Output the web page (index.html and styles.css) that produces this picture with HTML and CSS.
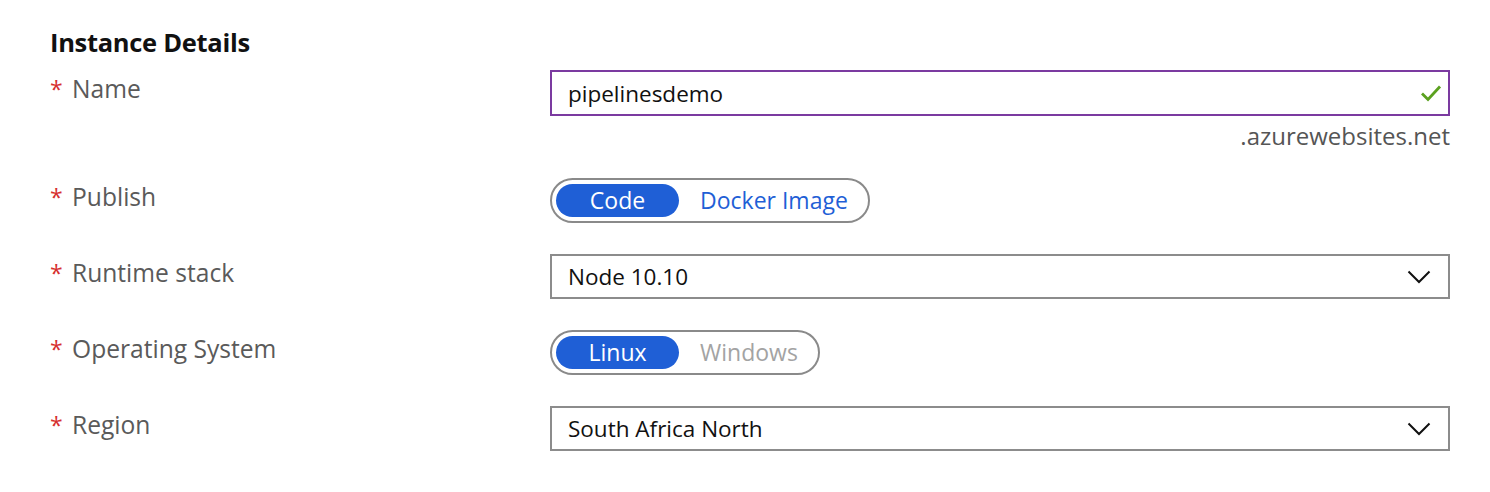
FILE: index.html
```html
<!DOCTYPE html>
<html lang="en">
<head>
<meta charset="utf-8">
<title>Instance Details</title>
<link rel="stylesheet" href="styles.css">
</head>
<body>
<section class="panel">
  <h2 class="heading">Instance Details</h2>

  <div class="row row-name">
    <div class="label"><span class="req">*</span>Name</div>
    <div class="field">
      <div class="input input-valid">
        <span class="value">pipelinesdemo</span>
        <svg class="check" width="22" height="18" viewBox="0 0 22 18"><path d="M2 9.5 L8 15.5 L20 2.5" fill="none" stroke="#5ba11f" stroke-width="2.8"/></svg>
      </div>
      <div class="suffix">.azurewebsites.net</div>
    </div>
  </div>

  <div class="row">
    <div class="label"><span class="req">*</span>Publish</div>
    <div class="field">
      <div class="toggle">
        <span class="opt opt-on">Code</span>
        <span class="opt opt-off">Docker Image</span>
      </div>
    </div>
  </div>

  <div class="row">
    <div class="label"><span class="req">*</span>Runtime stack</div>
    <div class="field">
      <div class="input select">
        <span class="value">Node 10.10</span>
        <svg class="chev" width="24" height="14" viewBox="0 0 24 14"><path d="M1.5 1.5 L12 12 L22.5 1.5" fill="none" stroke="#111" stroke-width="2"/></svg>
      </div>
    </div>
  </div>

  <div class="row">
    <div class="label"><span class="req">*</span>Operating System</div>
    <div class="field">
      <div class="toggle">
        <span class="opt opt-on">Linux</span>
        <span class="opt opt-dis">Windows</span>
      </div>
    </div>
  </div>

  <div class="row">
    <div class="label"><span class="req">*</span>Region</div>
    <div class="field">
      <div class="input select">
        <span class="value">South Africa North</span>
        <svg class="chev" width="24" height="14" viewBox="0 0 24 14"><path d="M1.5 1.5 L12 12 L22.5 1.5" fill="none" stroke="#111" stroke-width="2"/></svg>
      </div>
    </div>
  </div>
</section>
</body>
</html>
```

FILE: styles.css
```css
html, body {
  margin: 0;
  padding: 0;
  background: #ffffff;
}

body {
  font-family: "Open Sans", "Noto Sans", "Liberation Sans", sans-serif;
  color: #111;
}

.panel {
  padding: 26px 0 0 50px;
  width: 1400px;
}

.heading {
  margin: 0 0 12px 0;
  font-size: 25.5px;
  line-height: 32px;
  font-weight: 700;
  color: #111;
  letter-spacing: -0.3px;
}

.row {
  display: flex;
  align-items: flex-start;
  margin-bottom: 31px;
}

.row-name {
  margin-bottom: 30px;
}

.label {
  width: 500px;
  flex: none;
  font-size: 24.6px;
  line-height: 38px;
  color: #5a5a5a;
  letter-spacing: 0;
}

.req {
  display: inline-block;
  width: 22px;
  color: #d62f2f;
  font-size: 23px;
}

.field {
  width: 900px;
  flex: none;
}

.input {
  box-sizing: border-box;
  height: 45px;
  border: 2px solid #8c8c8c;
  display: flex;
  align-items: center;
  justify-content: space-between;
  padding: 0 16px 0 16px;
  font-size: 22.5px;
  color: #111;
}

.input-valid {
  height: 46px;
  border-color: #7b3aa0;
  border-width: 2px;
  padding-right: 6px;
}

.check {
  display: block;
}

.chev {
  display: block;
  margin-right: 1px;
}

.suffix {
  margin-top: 8px;
  text-align: right;
  font-size: 24px;
  line-height: 24px;
  color: #555;
}

.toggle {
  box-sizing: border-box;
  display: inline-flex;
  align-items: center;
  height: 45px;
  border: 2px solid #8a8a8a;
  border-radius: 23px;
  padding: 4px;
  font-size: 23px;
}

.opt {
  height: 33px;
  line-height: 33px;
  box-sizing: border-box;
}

.opt-on {
  width: 123px;
  text-align: center;
  background: #1f5fd6;
  color: #fff;
  border-radius: 17px;
}

.opt-off {
  padding: 0 16px 0 21px;
  color: #1f5fd6;
}

.opt-dis {
  padding: 0 16px 0 21px;
  color: #a3a3a3;
}
```
